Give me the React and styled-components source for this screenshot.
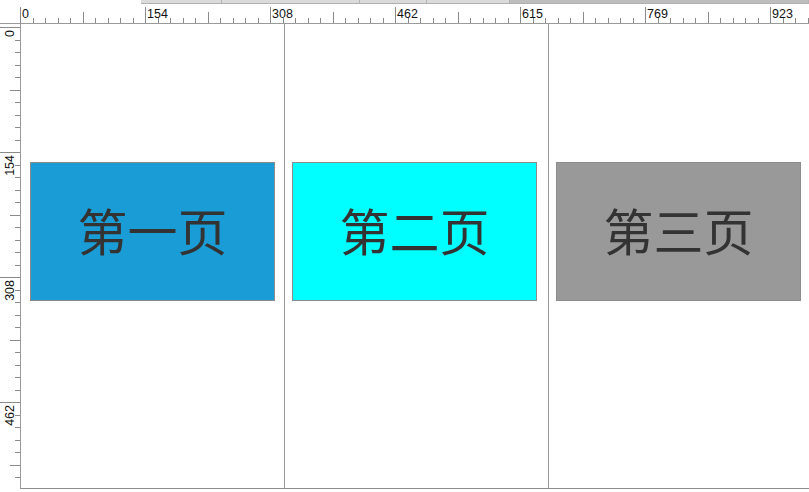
import React from 'react';
import styled, { createGlobalStyle } from 'styled-components';

const GlobalStyle = createGlobalStyle`
  html, body {
    margin: 0;
    padding: 0;
    background: #fff;
  }
  body {
    font-family: "Liberation Sans", Arial, sans-serif;
  }
`;

// 125 screen px for every 154 ruler units
const MAJOR = 125;
const MINOR = 12.5;
const LABELS = [0, 154, 308, 462, 615, 769, 923];

const pages = [
  { title: '第一页', color: '#1a9dd6', inset: 9 },
  { title: '第二页', color: '#00ffff', inset: 7 },
  { title: '第三页', color: '#999999', inset: 7 },
];

const strip = [
  { w: 81 },
  { w: 138 },
  { w: 67 },
  { w: 83 },
  { w: 299, dark: true },
];

function HRuler() {
  const ticks = [];
  for (let i = 0; 20 + i * MINOR < 809; i++) {
    const x = Math.round(20 + i * MINOR) + 0.5;
    const y1 = i % 10 === 0 ? 2 : i % 10 === 5 ? 7 : 13;
    ticks.push(<line key={i} x1={x} x2={x} y1={y1} y2={18} />);
  }
  return (
    <RulerSvg width="809" height="19">
      <g stroke="#8a8a8a" strokeWidth="1">
        {ticks}
        <line x1="0" x2="809" y1="18.5" y2="18.5" stroke="#9a9a9a" />
      </g>
      {LABELS.map((v, k) => (
        <text key={v} x={22 + k * MAJOR} y="12.5" fontSize="12.5" fill="#111" fontFamily="Liberation Sans, Arial, sans-serif">
          {v}
        </text>
      ))}
    </RulerSvg>
  );
}

function VRuler() {
  const ticks = [];
  for (let i = 0; 3 + i * MINOR < 464; i++) {
    const y = Math.round(3 + i * MINOR) + 0.5;
    const x1 = i % 10 === 0 ? 0 : i % 10 === 5 ? 10 : 15;
    ticks.push(<line key={i} x1={x1} x2={20} y1={y} y2={y} />);
  }
  return (
    <RulerSvg width="21" height="465">
      <g stroke="#8a8a8a" strokeWidth="1">
        {ticks}
        <line x1="20.5" x2="20.5" y1="0" y2="465" stroke="#9a9a9a" />
      </g>
      {LABELS.slice(0, 4).map((v, k) => (
        <text
          key={v}
          transform={`translate(13.5 ${6 + k * MAJOR}) rotate(-90)`}
          textAnchor="end"
          fontSize="12.5"
          fill="#111"
          fontFamily="Liberation Sans, Arial, sans-serif"
        >
          {v}
        </text>
      ))}
    </RulerSvg>
  );
}

export default function App() {
  return (
    <>
      <GlobalStyle />
      <Page>
        <Strip>
          {strip.map((s, i) => (
            <StripSegment key={i} $w={s.w} $dark={s.dark} />
          ))}
        </Strip>
        <HRuler />
        <Body>
          <VRuler />
          <Canvas>
            {pages.map((p) => (
              <Column key={p.title} $inset={p.inset}>
                <Slide $color={p.color}>{p.title}</Slide>
              </Column>
            ))}
          </Canvas>
        </Body>
      </Page>
    </>
  );
}

const Page = styled.div`
  width: 809px;
  height: 492px;
  overflow: hidden;
  display: flex;
  flex-direction: column;
  background: #fff;
`;

const Strip = styled.div`
  height: 5px;
  display: flex;
  padding-left: 141px;
  flex-shrink: 0;
`;

const StripSegment = styled.div`
  width: ${(p) => p.$w}px;
  height: 4px;
  flex-shrink: 0;
  box-sizing: border-box;
  background: ${(p) => (p.$dark ? '#bdbdbd' : '#dadada')};
  border-right: 1px solid #b4b4b4;
  border-bottom: 1px solid #b0b0b0;
`;

const RulerSvg = styled.svg`
  display: block;
  flex-shrink: 0;
`;

const Body = styled.div`
  display: flex;
  height: 465px;
  flex-shrink: 0;
`;

const Canvas = styled.div`
  flex: 1;
  display: flex;
  overflow: hidden;
  box-sizing: border-box;
  border-bottom: 1px solid #8c8c8c;
`;

const Column = styled.div`
  width: 264px;
  flex-shrink: 0;
  box-sizing: border-box;
  border-right: 1px solid #999;
  padding: 138px 0 0 ${(p) => p.$inset}px;
`;

const Slide = styled.div`
  width: 245px;
  height: 139px;
  box-sizing: border-box;
  padding-bottom: 6px;
  background: ${(p) => p.$color};
  border: 1px solid #8c8c8c;
  display: flex;
  align-items: center;
  justify-content: center;
  color: #333;
  font-family: "Noto Sans CJK SC", "Liberation Sans", sans-serif;
  font-size: 50px;
  line-height: 1;
`;
